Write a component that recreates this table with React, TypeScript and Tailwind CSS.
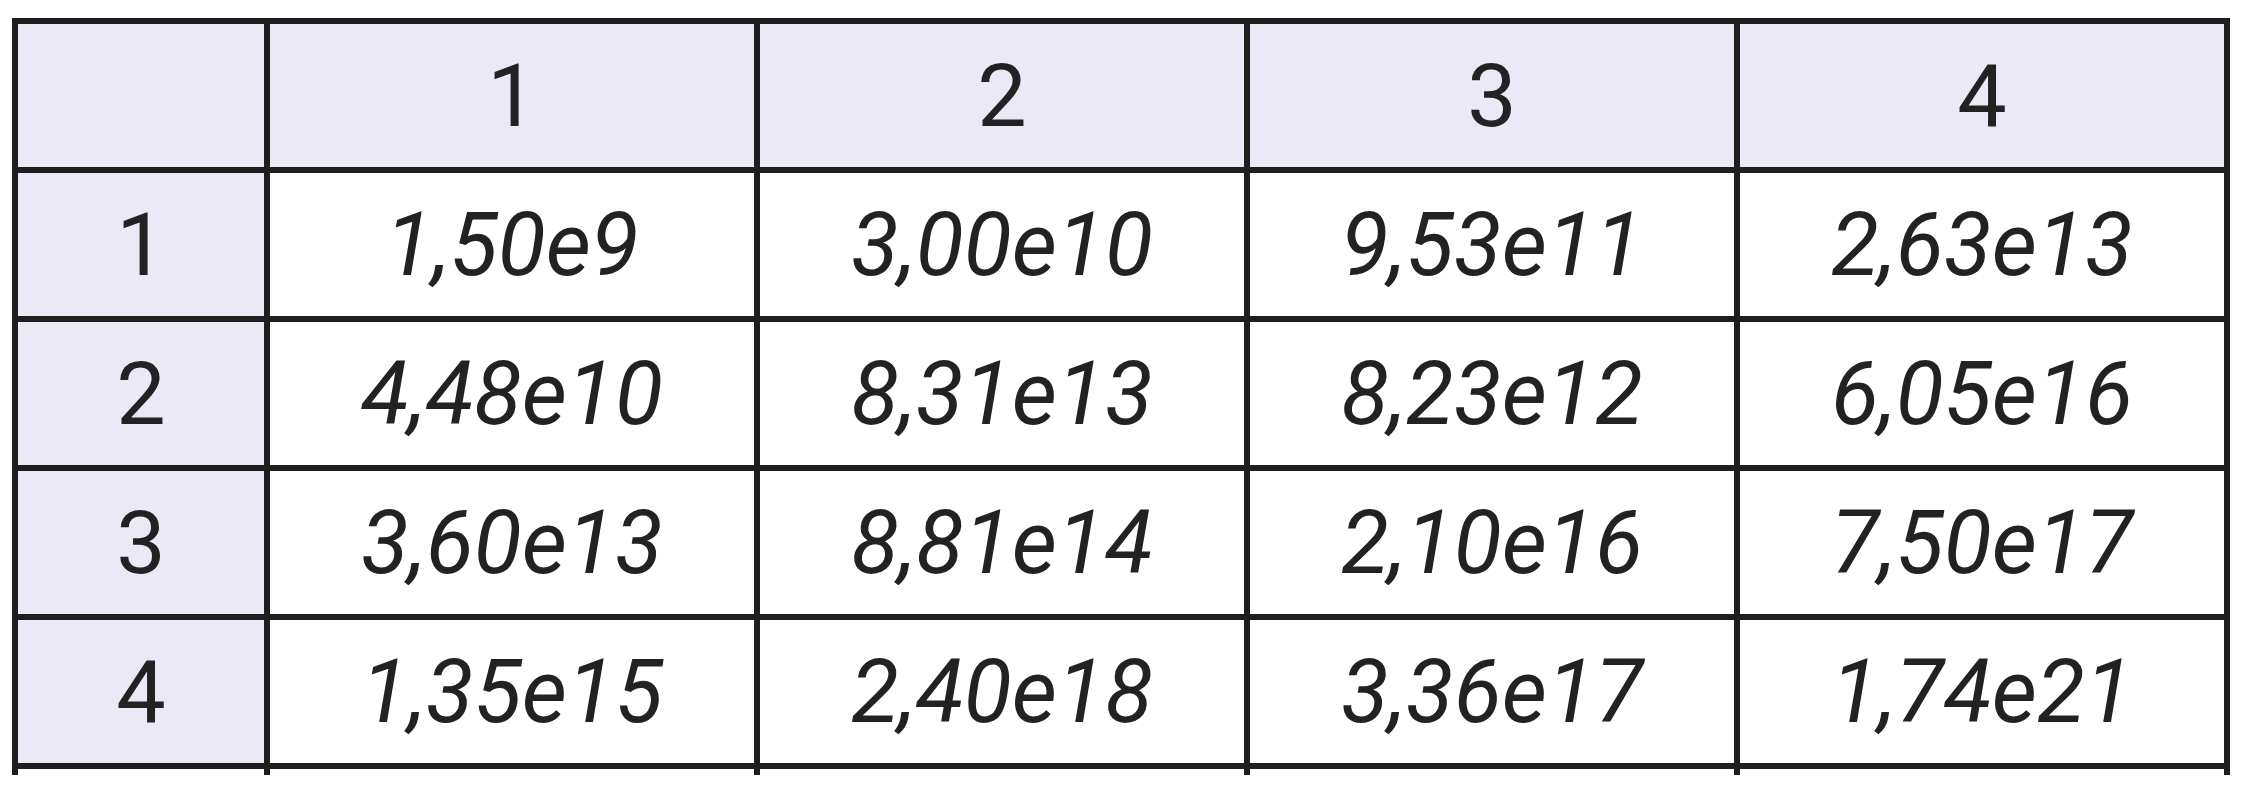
const COLS = ["1", "2", "3", "4"];

const ROWS: { label: string; values: string[] }[] = [
  { label: "1", values: ["1,50e9", "3,00e10", "9,53e11", "2,63e13"] },
  { label: "2", values: ["4,48e10", "8,31e13", "8,23e12", "6,05e16"] },
  { label: "3", values: ["3,60e13", "8,81e14", "2,10e16", "7,50e17"] },
  { label: "4", values: ["1,35e15", "2,40e18", "3,36e17", "1,74e21"] },
];

export default function App() {
  return (
    <div className="h-[800px] w-[2250px] bg-white pl-[12px] pt-[18px] font-['Roboto',sans-serif] text-[#222222]">
      <div className="grid w-fit grid-cols-[246px_repeat(4,484px)] gap-[6px] bg-[#1e1e1e] px-[6px] pt-[6px]">
        {/* header row */}
        <div className="h-[143px] bg-[#ebe9f6]" />
        {COLS.map((c) => (
          <div key={c} className="flex h-[143px] items-center justify-center bg-[#ebe9f6] text-[88px] leading-none">
            {c}
          </div>
        ))}

        {ROWS.map((r) => (
          <>
            <div key={`h-${r.label}`} className="flex h-[143px] items-center justify-center bg-[#ebe9f6] text-[88px] leading-none">
              {r.label}
            </div>
            {r.values.map((v, i) => (
              <div key={`${r.label}-${i}`} className="flex h-[143px] items-center justify-center bg-white text-[88px] italic leading-none">
                {v}
              </div>
            ))}
          </>
        ))}

        {/* cut-off edge: vertical rules run a little past the last line */}
        {[0, 1, 2, 3, 4].map((i) => (
          <div key={`tail-${i}`} className="h-[6px] bg-white" />
        ))}
      </div>
    </div>
  );
}
